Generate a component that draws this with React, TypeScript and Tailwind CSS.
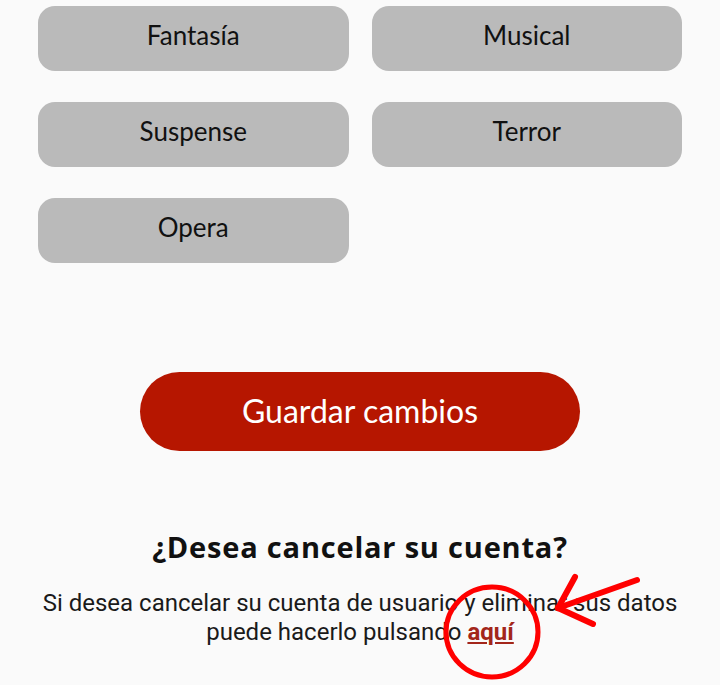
import React from "react";

const genres = ["Fantasía", "Musical", "Suspense", "Terror", "Opera"];

export default function App() {
  return (
    <div className="relative min-h-screen w-full bg-[#fafafa] overflow-hidden">
      <div className="grid grid-cols-2 gap-x-[23px] gap-y-[31px] px-[38px] pt-[6px]">
        {genres.map((g) => (
          <div
            key={g}
            className="flex h-[65px] items-center justify-center rounded-[17px] bg-[#bababa] pb-[6px] text-[26px] text-[#111] [font-family:Lato,'Open_Sans',sans-serif]"
          >
            {g}
          </div>
        ))}
      </div>

      <div className="mt-[109px] flex justify-center">
        <button className="flex h-[79px] w-[440px] items-center justify-center rounded-full bg-[#b61600] pb-[2px] text-[32px] text-white [font-family:Lato,sans-serif]">
          Guardar cambios
        </button>
      </div>

      <h2 className="mt-[78px] text-center text-[29px] font-bold tracking-[0.8px] text-[#111] [font-family:'Open_Sans',sans-serif] leading-[36px]">
        ¿Desea cancelar su cuenta?
      </h2>
      <p className="mt-[24px] text-center text-[24px] leading-[29px] text-[#1a1a1a] [font-family:Roboto,sans-serif]">
        Si desea cancelar su cuenta de usuario y eliminar sus datos
        <br />
        puede hacerlo pulsando{" "}
        <a className="font-bold text-[#a3261a] underline">aquí</a>
      </p>

      <svg
        className="pointer-events-none absolute left-0 top-0"
        width="720"
        height="685"
        viewBox="0 0 720 685"
      >
        <ellipse
          cx="492"
          cy="632"
          rx="46"
          ry="45"
          fill="none"
          stroke="#ff0000"
          strokeWidth="5"
        />
        <g stroke="#ff0000" strokeWidth="6" strokeLinecap="round" fill="none">
          <line x1="637" y1="580" x2="558" y2="608" />
          <line x1="558" y1="608" x2="575" y2="577" />
          <line x1="558" y1="608" x2="593" y2="624" />
        </g>
      </svg>
    </div>
  );
}
